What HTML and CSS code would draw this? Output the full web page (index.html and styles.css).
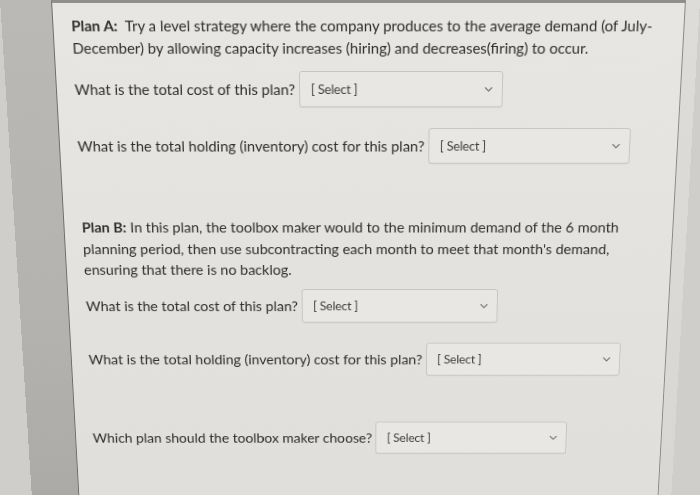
FILE: index.html
```html
<!DOCTYPE html>
<html lang="en">
<head>
<meta charset="utf-8">
<title>Quiz – Aggregate planning</title>
<link rel="stylesheet" href="styles.css">
</head>
<body>
<div class="photo">
  <div class="screen">
    <div class="side-left"></div>
    <main class="panel">
      <p class="para para-a"><strong>Plan A:</strong>&nbsp; Try a level strategy where the company produces to the average demand (of July-<wbr>December) by allowing capacity increases (hiring) and decreases(firing) to occur.</p>

      <div class="q q1">
        <span class="label">What is the total cost of this plan?</span>
        <div class="dropdown"><span class="ph">[ Select ]</span><svg class="chev" viewBox="0 0 10 6" width="9" height="6"><path d="M1 1l4 4 4-4" fill="none" stroke="#6b6b6b" stroke-width="1.3"/></svg></div>
      </div>

      <div class="q q2">
        <span class="label">What is the total holding (inventory) cost for this plan?</span>
        <div class="dropdown"><span class="ph">[ Select ]</span><svg class="chev" viewBox="0 0 10 6" width="9" height="6"><path d="M1 1l4 4 4-4" fill="none" stroke="#6b6b6b" stroke-width="1.3"/></svg></div>
      </div>

      <p class="para para-b"><strong>Plan B:</strong> <span class="lead">In this plan, the toolbox maker would to the minimum demand of the 6 month</span> planning period, then use subcontracting each month to meet that month's demand, ensuring that there is no backlog.</p>

      <div class="q q3">
        <span class="label">What is the total cost of this plan?</span>
        <div class="dropdown"><span class="ph">[ Select ]</span><svg class="chev" viewBox="0 0 10 6" width="9" height="6"><path d="M1 1l4 4 4-4" fill="none" stroke="#6b6b6b" stroke-width="1.3"/></svg></div>
      </div>

      <div class="q q4">
        <span class="label">What is the total holding (inventory) cost for this plan?</span>
        <div class="dropdown"><span class="ph">[ Select ]</span><svg class="chev" viewBox="0 0 10 6" width="9" height="6"><path d="M1 1l4 4 4-4" fill="none" stroke="#6b6b6b" stroke-width="1.3"/></svg></div>
      </div>

      <div class="q q5">
        <span class="label">Which plan should the toolbox maker choose?</span>
        <div class="dropdown"><span class="ph">[ Select ]</span><svg class="chev" viewBox="0 0 10 6" width="9" height="6"><path d="M1 1l4 4 4-4" fill="none" stroke="#6b6b6b" stroke-width="1.3"/></svg></div>
      </div>
    </main>
    <div class="side-right"></div>
  </div>
</div>
</body>
</html>
```

FILE: styles.css
```css
html, body {
  margin: 0;
  padding: 0;
  width: 700px;
  height: 495px;
  overflow: hidden;
  background: #cfcecb;
}

.photo {
  width: 700px;
  height: 495px;
  overflow: hidden;
}

.screen {
  width: 700px;
  height: 600px;
  display: flex;
  transform-origin: 368px 0;
  transform: perspective(1000px) rotateX(-9.9deg);
  font-family: Lato, "Open Sans", sans-serif;
  color: #2f2f2d;
}

.side-left {
  width: 51px;
  flex: none;
  background: linear-gradient(180deg, #bab9b5 0%, #b3b2ae 60%, #a9a8a4 100%);
}

.side-right {
  flex: 1;
  background: linear-gradient(180deg, #dddcd8 0%, #d7d6d2 100%);
  border-left: 1px solid #8a8985;
}

.panel {
  width: 634px;
  flex: none;
  box-sizing: border-box;
  border-left: 1px solid #6e6d69;
  border-top: 3px solid #8f8e8a;
  background: linear-gradient(180deg, #e7e6e2 0%, #e3e2de 50%, #dfdeda 100%);
  padding: 12px 16px 0 18px;
}

.para {
  margin: 0;
  font-size: 15px;
  line-height: 23px;
  max-width: 600px;
}

.para strong {
  font-weight: 700;
}

.q {
  display: flex;
  align-items: center;
  font-size: 15px;
}

.label {
  white-space: nowrap;
  margin-right: 4px;
}

.dropdown {
  box-sizing: border-box;
  width: 207px;
  height: 38px;
  border: 1px solid #c6c5c1;
  border-radius: 3px;
  background: #e8e7e3;
  display: flex;
  align-items: center;
  justify-content: space-between;
  padding: 0 9px 0 11px;
  box-shadow: 0 1px 0 rgba(0,0,0,0.04);
}

.ph {
  font-size: 13px;
  color: #3f3f3d;
  letter-spacing: -0.2px;
}

.chev {
  display: block;
}

.q1 { margin-top: 12px; }
.q2 { margin-top: 22px; }
.para-b { margin-top: 58px; line-height: 23.5px; }
.q3 { margin-top: 9px; }
.q4 { margin-top: 23px; }
.q5 { margin-top: 54px; }
```
